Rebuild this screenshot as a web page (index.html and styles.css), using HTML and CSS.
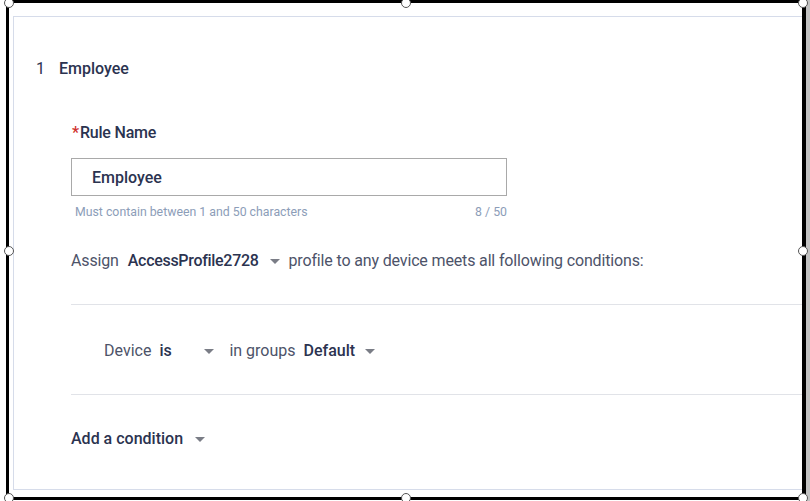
FILE: index.html
```html
<!DOCTYPE html>
<html lang="en">
  <head>
    <meta charset="UTF-8" />
    <meta name="viewport" content="width=device-width, initial-scale=1.0" />
    <title>Access Rule</title>
    <link rel="stylesheet" href="styles.css">
  </head>
  <body>
    <div class="frame">
      <div class="frame-inner">
        <div class="card">
          <div class="rule-title">
            <span class="rule-index">1</span>
            <span class="rule-name">Employee</span>
          </div>

          <div class="rule-body">
            <label class="field-label" for="ruleName"><span class="req">*</span>Rule Name</label>
            <div class="input-box">
              <input type="text" id="ruleName" value="Employee" />
            </div>
            <div class="helper">
              <span>Must contain between 1 and 50 characters</span>
              <span>8 / 50</span>
            </div>

            <div class="assign">
              <span>Assign</span>
              <span class="pick">AccessProfile2728</span>
              <span class="caret"></span>
              <span class="after-caret">profile to any device meets all following conditions:</span>
            </div>

            <div class="condition">
              <span>Device</span>
              <span class="pick is">is</span>
              <span class="caret"></span>
              <span class="after-caret">in groups</span>
              <span class="pick">Default</span>
              <span class="caret"></span>
            </div>

            <div class="add-condition">
              <span>Add a condition</span>
              <span class="caret"></span>
            </div>
          </div>
        </div>
      </div>

      <span class="handle h-tl"></span>
      <span class="handle h-tm"></span>
      <span class="handle h-tr"></span>
      <span class="handle h-ml"></span>
      <span class="handle h-mr"></span>
      <span class="handle h-bl"></span>
      <span class="handle h-bm"></span>
      <span class="handle h-br"></span>
    </div>
    <div class="gutter"></div>
  </body>
</html>
```

FILE: styles.css
```css
* {
  margin: 0;
  padding: 0;
  box-sizing: border-box;
  font-family: Roboto, "Liberation Sans", sans-serif;
}

body {
  display: flex;
  height: 501px;
  padding-left: 6px;
  background: #fff;
  overflow: hidden;
}

.frame {
  position: relative;
  width: 800px;
  height: 500px;
  border: 3px solid #000;
  border-right-width: 4px;
  flex-shrink: 0;
}

.frame-inner {
  height: 100%;
  overflow: hidden;
}

.gutter {
  flex: 1;
  background: #c2c2c2;
}

.card {
  height: 474px;
  margin: 13px -20px 0 4px;
  border: 1px solid #d6dcea;
  padding: 42px 0 0 22px;
  color: #2b3350;
}

.rule-title {
  display: flex;
  gap: 14px;
  font-size: 16px;
  line-height: 20px;
  font-weight: 500;
}

.rule-index {
  font-weight: 400;
}

.rule-body {
  margin-left: 35px;
  padding-top: 44px;
}

.field-label {
  display: block;
  font-size: 16px;
  line-height: 20px;
  font-weight: 500;
  margin-left: 1px;
  letter-spacing: -0.2px;
}

.req {
  color: #d0302c;
  margin-right: 1px;
}

.input-box {
  width: 436px;
  height: 38px;
  margin-top: 15px;
  border: 1px solid #a9a9a9;
}

.input-box input {
  width: 100%;
  height: 100%;
  border: none;
  outline: none;
  padding-left: 20px;
  font-size: 16px;
  font-weight: 500;
  color: #2b3350;
  background: transparent;
}

.helper {
  display: flex;
  justify-content: space-between;
  width: 436px;
  margin-top: 8px;
  padding-left: 4px;
  font-size: 12.3px;
  line-height: 16px;
  color: #8c9db8;
}

.assign,
.condition,
.add-condition {
  display: flex;
  align-items: center;
  font-size: 16px;
  line-height: 20px;
  color: #4d5369;
}

.assign {
  margin-top: 31px;
  padding-bottom: 33px;
  border-bottom: 1px solid #e1e3e8;
  gap: 9px;
  letter-spacing: -0.15px;
}

.assign .pick {
  letter-spacing: -0.3px;
}

.pick {
  font-weight: 500;
  color: #2b3350;
}

.caret {
  width: 0;
  height: 0;
  border-left: 5px solid transparent;
  border-right: 5px solid transparent;
  border-top: 5px solid #7a7d86;
  margin-left: 2px;
}

.condition {
  padding: 36px 0 33px 33px;
  border-bottom: 1px solid #e1e3e8;
  gap: 8px;
}

.condition .is {
  width: 35px;
}

.condition .after-caret {
  margin-left: 7px;
}

.add-condition {
  margin-top: 34px;
  gap: 10px;
  font-weight: 500;
  color: #2b3350;
}

.handle {
  position: absolute;
  width: 10px;
  height: 10px;
  border-radius: 50%;
  background: #fff;
  border: 1.5px solid #555;
}

.h-tl { left: -5px; top: -5px; }
.h-tm { left: 392px; top: -5px; }
.h-tr { left: 789px; top: -5px; }
.h-ml { left: -5px; top: 243px; }
.h-mr { left: 789px; top: 243px; }
.h-bl { left: -5px; top: 490px; }
.h-bm { left: 392px; top: 490px; }
.h-br { left: 789px; top: 490px; }
```
